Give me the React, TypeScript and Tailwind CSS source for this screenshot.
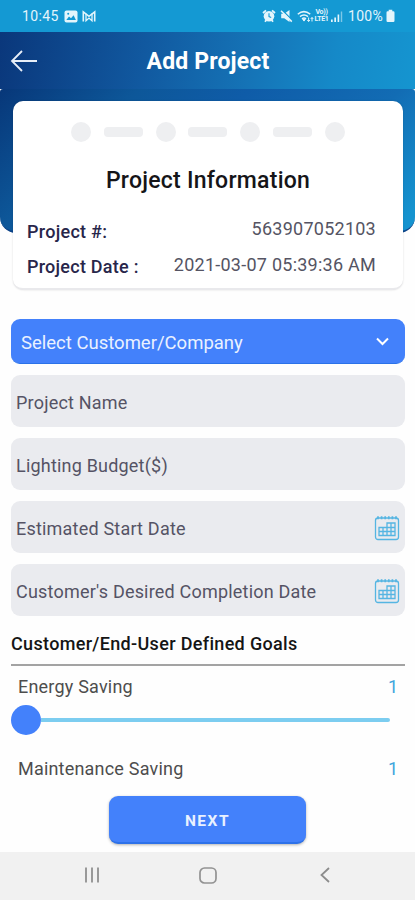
import { useState } from 'react'

interface Goal {
  id: number
  label: string
  value: number
}

interface Field {
  id: string
  label: string
  isDate: boolean
}

const fields: Field[] = [
  { id: 'name', label: 'Project Name', isDate: false },
  { id: 'budget', label: 'Lighting Budget($)', isDate: false },
  { id: 'start', label: 'Estimated Start Date', isDate: true },
  { id: 'end', label: "Customer's Desired Completion Date", isDate: true },
]

function StatusBar() {
  return (
    <div className="flex h-8 shrink-0 items-center justify-between bg-[#1499d3] pl-[22px] pr-[20px] text-[#e3f5fc]">
      <div className="flex items-center">
        <span className="w-[37px] whitespace-nowrap text-[14px] leading-8 tracking-[0.4px]">10:45</span>
        <svg className="ml-[5px]" width="14" height="13" viewBox="0 0 14 13">
          <rect x="0.5" y="0.5" width="13" height="12" rx="2" fill="#e3f5fc" />
          <path d="M2.3 10 5 6.5l2 1.8 2.6-3 2.3 4.7z" fill="#1499d3" />
          <circle cx="4.2" cy="3.8" r="1" fill="#1499d3" />
        </svg>
        <svg className="ml-[4px]" width="14" height="13" viewBox="0 0 14 13" fill="none" stroke="#e3f5fc">
          <path d="M1.3 11.5V1.8L7 6.3l5.7-4.5v9.7" strokeWidth="1.6" />
          <path d="M4 3.5v7.2L7 8l3 2.7V3.5" strokeWidth="1.3" />
        </svg>
      </div>

      <div className="flex items-center">
        {/* Alarm */}
        <svg width="14" height="14" viewBox="0 0 14 14">
          <path d="M1 4 4 1.3M13 4l-3-2.7M3 12.8l1.5-2M11 12.8l-1.5-2" stroke="#e3f5fc" strokeWidth="1.8" />
          <circle cx="7" cy="7.2" r="5.3" fill="#e3f5fc" />
          <path d="M7 4.3v3.3l2.2.8" fill="none" stroke="#1499d3" strokeWidth="1.1" />
        </svg>
        {/* Muted */}
        <svg className="ml-[4px]" width="13" height="14" viewBox="0 0 13 14">
          <path d="M1.2 4.8h3L9.5 1v12L4.2 9.2h-3z" fill="#e3f5fc" />
          <path d="m1.8.8 11 11" stroke="#1499d3" strokeWidth="1.3" />
          <path d="m1 1.8 10.8 10.8" stroke="#e3f5fc" strokeWidth="1.5" />
        </svg>
        {/* Wifi */}
        <svg className="ml-[4px]" width="17" height="14" viewBox="0 0 17 14" fill="none" stroke="#e3f5fc" strokeWidth="1.5">
          <path d="M.8 5.2q6-5.2 12.4 0M3 7.6q4-3.3 8 0M5 9.8q2-1.5 4 0" />
          <path d="m5.8 10.5 1.2 1.6 1.2-1.6zM11.6 8.5v4M10.3 11l1.3 1.5L12.9 11M15 12.5v-4M13.7 10 15 8.5l1.3 1.5" strokeWidth="1" />
        </svg>
        <div className="w-[15px] text-center text-[7px] font-bold leading-[7px]">
          <div className="whitespace-nowrap tracking-[-0.3px]">Vo))</div>
          <div className="whitespace-nowrap tracking-[-0.3px]">LTE1</div>
        </div>
        {/* Signal */}
        <svg className="ml-[1px]" width="13" height="13" viewBox="0 0 13 13" fill="#e3f5fc">
          <path d="M1 9.5h1.7V12H1zM4.3 7.5H6V12H4.3zM7.6 4.5h1.6V12H7.6z" />
          <path d="M10.8 1.5h1.4V12h-1.4z" opacity="0.5" />
        </svg>
        <span className="ml-[5px] w-[37px] whitespace-nowrap text-[14px] leading-8 tracking-[0.3px]">100%</span>
        <svg className="ml-px" width="9" height="14" viewBox="0 0 9 14" fill="#e3f5fc">
          <path d="M2.7.7h3.6v1.5h1q1.2 0 1.2 1.2v8.4q0 1.2-1.2 1.2H1.7Q.5 13 .5 11.8V3.4q0-1.2 1.2-1.2h1z" />
        </svg>
      </div>
    </div>
  )
}

function CalendarIcon() {
  return (
    <svg className="mt-[2px]" width="26" height="26" viewBox="0 0 26 26" fill="none" stroke="#55b5e2">
      <rect x="1.5" y="3" width="23" height="21.5" rx="2.5" strokeWidth="1.3" />
      <path d="M4 1.2v3M7.6 1.2v3M11.2 1.2v3M14.8 1.2v3M18.4 1.2v3M22 1.2v3" strokeWidth="1.7" />
      <path d="M5 12.5h8V8h8v12.5H5zM5 16.5h16M13 12.5h8M9 12.5v8M13 12.5v8M17 8v12.5" strokeWidth="1.3" />
    </svg>
  )
}

function Steps() {
  return (
    <div className="flex h-5 items-center justify-between px-[58px]">
      {[0, 1, 2, 3, 4, 5, 6].map((n) => (
        <div
          key={n}
          className={n % 2 === 0 ? 'size-[20px] rounded-full bg-[#eeeff1]' : 'h-[10px] w-[39px] rounded-[4px] bg-[#eeeff1]'}
        />
      ))}
    </div>
  )
}

export default function App() {
  const [goals] = useState<Goal[]>([
    { id: 1, label: 'Energy Saving', value: 1 },
    { id: 2, label: 'Maintenance Saving', value: 1 },
  ])

  return (
    <div className="flex h-[900px] w-[415px] flex-col overflow-hidden bg-[#fefefe] font-['Roboto',sans-serif]">
      <StatusBar />

      {/* Header */}
      <header className="grid h-[57px] shrink-0 grid-cols-[40px_1fr_40px] items-center bg-linear-[100deg,#0a377b_0%,#1159a0_35%,#1573b6_60%,#1589c8_80%,#1595d0_100%]">
        <button aria-label="Back" className="pl-[10px]">
          <svg width="28" height="22" viewBox="0 0 28 22" fill="none" stroke="#e8eff8" strokeWidth="1.8">
            <path d="M27 11H2M12 1 2 11l10 10" />
          </svg>
        </button>
        <h1 className="whitespace-nowrap pl-px pt-[4px] text-center text-[23px] font-bold tracking-[0.15px] text-white">Add Project</h1>
      </header>

      <div className="h-[144px] shrink-0 rounded-t-[3px] rounded-b-[16px] border-b-2 border-[#0c4388] bg-linear-[135deg,#073779_0%,#0d5799_25%,#0f5ca8_45%,#126cb4_72%,#1593cf_96%]" />

      {/* Project card */}
      <section className="relative ml-[13px] mr-[12px] -mt-[132px] h-[189px] shrink-0 rounded-[10px] border-b-2 border-[#e9e9ec] bg-white pt-[21px] shadow-[0_0_2px_rgba(0,0,0,0.15)]">
        <Steps />
        <h2 className="mt-[24px] whitespace-nowrap text-center text-[23px] font-medium leading-[30px] tracking-[0.25px] text-[#151518]">
          Project Information
        </h2>
        <div className="mt-[16px] flex h-[36px] items-center justify-between pl-[14px] pr-[27px]">
          <span className="whitespace-nowrap pt-[3px] text-[18px] font-medium leading-[32px] tracking-[0.28px] text-[#28264a]">Project #:</span>
          <span className="whitespace-nowrap pb-[2px] text-[18px] leading-[32px] tracking-[0.25px] text-[#555463]">563907052103</span>
        </div>
        <div className="flex h-[35px] items-center justify-between pl-[14px] pr-[27px]">
          <span className="whitespace-nowrap pt-[3px] text-[18px] font-medium leading-[32px] tracking-[0.25px] text-[#28264a]">Project Date :</span>
          <span className="whitespace-nowrap pb-[2px] text-[18px] leading-[32px] tracking-[0.25px] text-[#555463]">2021-03-07 05:39:36 AM</span>
        </div>
      </section>

      <form className="mt-[29px] flex shrink-0 flex-col gap-[11px] px-[11px]">
        <button
          type="button"
          className="flex h-[45px] w-[394px] items-center justify-between rounded-[9px] border-b border-[#2b72e8] bg-[#4381fb] pl-[10px] pr-[16px] text-[#eaf1ff]"
        >
          <span className="whitespace-nowrap pt-[5px] text-[18.5px]">Select Customer/Company</span>
          <svg width="13" height="9" viewBox="0 0 13 9" fill="none" stroke="#fff" strokeWidth="2">
            <path d="m1 1.5 5.5 5.5L12 1.5" />
          </svg>
        </button>
        {fields.map((field) => (
          <label
            key={field.id}
            className="flex h-[52px] w-[394px] items-center justify-between rounded-[9px] bg-[#eaebef] pl-[5px] pr-[5px]"
          >
            <span className="whitespace-nowrap pt-[3px] text-[18px] tracking-[0.2px] text-[#555365]">{field.label}</span>
            {field.isDate && <CalendarIcon />}
          </label>
        ))}
      </form>

      {/* Goals */}
      <h3 className="ml-[11px] mr-[10px] mt-[14px] h-[36px] shrink-0 whitespace-nowrap border-b-2 border-[#a3a3a3] text-[18px] font-medium leading-[27px] tracking-[0.33px] text-[#151515]">
        Customer/End-User Defined Goals
      </h3>
      <div className="flex h-[120px] shrink-0 flex-col overflow-hidden pl-[11px] pr-[10px]">
        {goals.map((goal) => (
          <div key={goal.id} className="h-[82px] shrink-0">
            <div className="flex h-[40px] items-center justify-between px-[7px] text-[18px]">
              <span className="whitespace-nowrap tracking-[0.2px] text-[#4d4d4d]">{goal.label}</span>
              <span className="text-[#40a5dc]">{goal.value}</span>
            </div>
            <div className="-mt-px flex h-[30px] items-center">
              <div className="size-[30px] shrink-0 rounded-full bg-[#4381fb]" />
              <div className="mr-[15px] h-[4px] flex-1 rounded-r-full bg-[#7ccdf0]" />
            </div>
          </div>
        ))}
      </div>

      <button className="mx-auto mt-[10px] h-[48px] w-[197px] shrink-0 rounded-[9px] border-b-2 border-[#2e72e9] bg-[#4381fb] pt-[5px] text-[15.5px] font-bold tracking-[1.5px] text-[#e9f1ff] shadow-[0_1px_3px_rgba(0,0,0,0.3)]">
        NEXT
      </button>

      {/* Android navigation */}
      <nav className="mt-auto flex h-[48px] shrink-0 items-center bg-[#f1f1f1] pb-[2px] pl-[84px]">
        <svg width="16" height="16" viewBox="0 0 16 16" stroke="#999" strokeWidth="2">
          <path d="M2 .5v15M8 .5v15M14 .5v15" />
        </svg>
        <svg className="ml-[99px]" width="18" height="17" viewBox="0 0 18 17" fill="none" stroke="#929292" strokeWidth="1.7">
          <rect x="1" y="1" width="16" height="15" rx="4.5" />
        </svg>
        <svg className="ml-[103px]" width="10" height="16" viewBox="0 0 10 16" fill="none" stroke="#8c8c8c" strokeWidth="1.8">
          <path d="M9 1 1.5 8 9 15" />
        </svg>
      </nav>
    </div>
  )
}
